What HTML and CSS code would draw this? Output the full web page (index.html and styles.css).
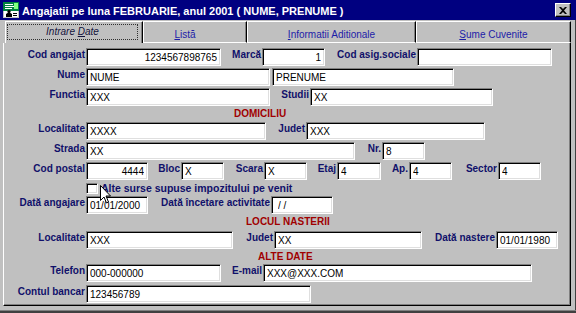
FILE: index.html
```html
<!DOCTYPE html>
<html lang="ro">
<head>
  <meta charset="UTF-8">
  <title>Angajatii pe luna FEBRUARIE</title>
  <link rel="stylesheet" href="styles.css">
</head>
<body>

<div class="fereastra">

  <div class="titlu">
    <svg class="icon" width="16" height="16" viewBox="0 0 16 16">
      <rect x="0" y="0" width="16" height="16" fill="#c0c0c0"/>
      <rect x="0" y="0" width="16" height="9" fill="#008040"/>
      <rect x="2" y="2" width="8" height="1" fill="#fff"/>
      <rect x="2" y="4" width="10" height="1" fill="#fff"/>
      <rect x="2" y="6" width="7" height="1" fill="#fff"/>
      <rect x="11" y="1" width="4" height="6" fill="#80ff80"/>
      <rect x="1" y="9" width="14" height="6" fill="#fff"/>
      <path d="M3 15 L3 12 L6 10 L9 12 L9 15 Z" fill="#000"/>
      <circle cx="6" cy="9.5" r="1.6" fill="#000"/>
      <rect x="10" y="11" width="4" height="1" fill="#000"/>
      <rect x="10" y="13" width="4" height="1" fill="#000"/>
    </svg>
    <span class="titlu-text">Angajatii pe luna FEBRUARIE, anul 2001 ( NUME, PRENUME )</span>
    <span class="inchide">
      <svg width="8" height="7" viewBox="0 0 8 7">
        <path d="M0 0 L2 0 L4 2 L6 0 L8 0 L5 3.5 L8 7 L6 7 L4 5 L2 7 L0 7 L3 3.5 Z" fill="#000"/>
      </svg>
    </span>
  </div>

  <div class="taburi">
    <div class="tab activ t1"><span class="focus"><i>Intrare <u>D</u>ate</i></span></div>
    <div class="tab t2"><u>L</u>istă</div>
    <div class="tab t3"><u>I</u>nformatii Aditionale</div>
    <div class="tab t4"><u>S</u>ume Cuvenite</div>
  </div>

  <div class="pagina">

    <div class="rand primul">
      <label class="lbl l-prim">Cod angajat</label>
      <input class="fld f-cod dr" value="1234567898765">
      <label class="lbl l-marca">Marcă</label>
      <input class="fld f-marca dr" value="1">
      <label class="lbl l-asig">Cod asig.sociale</label>
      <input class="fld f-asig" value="">
    </div>

    <div class="rand">
      <label class="lbl l-prim">Nume</label>
      <input class="fld f-nume" value="NUME">
      <input class="fld f-prenume" value="PRENUME">
    </div>

    <div class="rand">
      <label class="lbl l-prim">Functia</label>
      <input class="fld f-nume" value="XXX">
      <label class="lbl l-studii">Studii</label>
      <input class="fld f-studii" value="XX">
    </div>

    <div class="sectiune s-domiciliu">DOMICILIU</div>

    <div class="rand">
      <label class="lbl l-prim">Localitate</label>
      <input class="fld f-loc" value="XXXX">
      <label class="lbl l-judet">Judet</label>
      <input class="fld f-judet" value="XXX">
    </div>

    <div class="rand">
      <label class="lbl l-prim">Strada</label>
      <input class="fld f-strada" value="XX">
      <label class="lbl l-nr">Nr.</label>
      <input class="fld f-mic" value="8">
    </div>

    <div class="rand">
      <label class="lbl l-prim">Cod postal</label>
      <input class="fld f-data dr" value="4444">
      <label class="lbl l-bloc">Bloc</label>
      <input class="fld f-mic" value="X">
      <label class="lbl l-scara">Scara</label>
      <input class="fld f-mic" value="X">
      <label class="lbl l-etaj">Etaj</label>
      <input class="fld f-etaj" value="4">
      <label class="lbl l-ap">Ap.</label>
      <input class="fld f-mic" value="4">
      <label class="lbl l-sector">Sector</label>
      <input class="fld f-mic" value="4">
    </div>

    <div class="rand-bifa">
      <span class="bifa"></span>
      <span class="bifa-text">Alte surse supuse impozitului pe venit</span>
    </div>

    <div class="rand">
      <label class="lbl l-prim">Dată angajare</label>
      <input class="fld f-data" value="01/01/2000">
      <label class="lbl l-incetare">Dată încetare activitate</label>
      <input class="fld f-data f-gol" value="/ /">
    </div>

    <div class="sectiune s-nastere">LOCUL NASTERII</div>

    <div class="rand sus3">
      <label class="lbl l-prim">Localitate</label>
      <input class="fld f-locn" value="XXX">
      <label class="lbl l-judetn">Judet</label>
      <input class="fld f-judetn" value="XX">
      <label class="lbl l-nastere">Dată nastere</label>
      <input class="fld f-data" value="01/01/1980">
    </div>

    <div class="sectiune s-alte">ALTE DATE</div>

    <div class="rand sus1">
      <label class="lbl l-prim">Telefon</label>
      <input class="fld f-cod" value="000-000000">
      <label class="lbl l-email">E-mail</label>
      <input class="fld f-email" value="XXX@XXX.COM">
    </div>

    <div class="rand sus3">
      <label class="lbl l-prim">Contul bancar</label>
      <input class="fld f-cont" value="123456789">
    </div>

  </div>

  <svg class="cursor" width="12" height="19" viewBox="0 0 12 19">
    <path d="M0.5 0.5 L0.5 15.5 L4 12 L6.5 18 L8.5 17 L6 11 L10.5 11 Z" fill="#fff" stroke="#000" stroke-width="1"/>
  </svg>

</div>

</body>
</html>
```

FILE: styles.css
```css
body {
  margin: 0;
  font-family: "Liberation Sans", Arial, sans-serif;
  background-color: #c0c0c0;
}

.fereastra {
  position: relative;
  width: 576px;
  height: 313px;
  background-color: #c0c0c0;
  overflow: hidden;
  box-shadow: inset 0 -2px #404040, inset 0 -3px #808080, inset -1px 0 #404040;
}

/* bara de titlu */
.titlu {
  display: flex;
  align-items: center;
  height: 20px;
  background-color: #000080;
  color: white;
  padding-left: 3px;
}

.icon {
  display: block;
}

.titlu-text {
  flex: 1;
  margin-left: 3px;
  padding-top: 1px;
  font-size: 11px;
  font-weight: bold;
  white-space: nowrap;
}

.inchide {
  box-sizing: border-box;
  width: 16px;
  height: 14px;
  margin-right: 5px;
  display: flex;
  align-items: center;
  justify-content: center;
  background-color: #c0c0c0;
  border: 1px solid;
  border-color: #fff #000 #000 #fff;
  box-shadow: inset -1px -1px #808080;
}

/* taburi */
.taburi {
  display: flex;
  height: 22px;
  margin: 1px 0 0 5px;
}

.tab {
  box-sizing: border-box;
  height: 22px;
  padding-top: 7px;
  border-top: 1px solid #fff;
  border-left: 1px solid #fff;
  border-right: 1px solid #000;
  border-bottom: 1px solid #fff;
  box-shadow: inset -1px 0 #808080;
  font-size: 10px;
  line-height: 12px;
  color: #1c1ca8;
  text-align: center;
  white-space: nowrap;
}

.tab.activ {
  border-bottom: none;
  padding-top: 2px;
  color: #14143c;
}

.t1 { width: 138px; }
.t2 { width: 104px; padding-right: 20px; }
.t3 { width: 169px; }
.t4 { width: 155px; }

.focus {
  display: block;
  box-sizing: border-box;
  height: 16px;
  margin: 0 4px 0 1px;
  padding-top: 1px;
  border: 1px dotted #303030;
}

/* pagina cu campuri */
.pagina {
  box-sizing: border-box;
  width: 568px;
  margin-left: 3px;
  padding: 5px 0 2px 0;
  border-left: 1px solid #fff;
  border-right: 1px solid #000;
  border-bottom: 1px solid #000;
  box-shadow: inset -1px -1px #808080;
}

.rand {
  display: flex;
  align-items: flex-start;
  height: 18px;
  margin-top: 2px;
}

.rand.primul { margin-top: 0; }
.rand.sus3 { margin-top: 3px; }
.rand.sus1 { margin-top: 1px; }

.lbl {
  box-sizing: border-box;
  padding-right: 1px;
  padding-top: 1px;
  font-size: 10px;
  line-height: 12px;
  font-weight: bold;
  color: #10106a;
  text-align: right;
  white-space: nowrap;
}

.fld {
  box-sizing: border-box;
  height: 18px;
  margin: 0;
  padding: 0 3px;
  border: 1px solid;
  border-color: #808080 #fff #fff #808080;
  box-shadow: inset 1px 1px #000, inset -1px -1px #dfdfdf;
  background-color: white;
  font-family: "Liberation Sans", Arial, sans-serif;
  font-size: 10px;
  color: #000;
  outline: none;
}

.fld.dr { text-align: right; }
.fld.f-gol { padding-left: 6px; }

.sectiune {
  height: 12px;
  margin-top: 2px;
  font-size: 10px;
  line-height: 12px;
  font-weight: bold;
  color: #a00000;
  white-space: nowrap;
}

.s-domiciliu { padding-left: 230px; }
.s-nastere { padding-left: 242px; }
.s-alte { padding-left: 254px; }

.rand-bifa {
  display: flex;
  align-items: flex-start;
  height: 12px;
  margin-top: 2px;
  padding-left: 82px;
}

.bifa {
  box-sizing: border-box;
  width: 12px;
  height: 11px;
  margin-top: 1px;
  background-color: white;
  border: 1px solid;
  border-color: #808080 #fff #fff #808080;
  box-shadow: inset 1px 1px #000, inset -1px -1px #dfdfdf;
}

.bifa-text {
  margin-left: 3px;
  font-size: 10.5px;
  line-height: 12px;
  font-weight: bold;
  color: #10106a;
  white-space: nowrap;
}

/* latimi etichete */
.l-prim { width: 82px; }
.l-marca { width: 41px; }
.l-asig { width: 92px; }
.l-studii { width: 40px; }
.l-judet { width: 40px; }
.l-nr { width: 27px; }
.l-bloc { width: 33px; }
.l-scara { width: 40px; }
.l-etaj { width: 30px; }
.l-ap { width: 28px; }
.l-sector { width: 46px; }
.l-incetare { width: 123px; }
.l-judetn { width: 41px; }
.l-nastere { width: 74px; }
.l-email { width: 42px; }

/* latimi campuri */
.f-cod { width: 135px; }
.f-marca { width: 63px; }
.f-asig { width: 135px; }
.f-nume { width: 184px; }
.f-prenume { width: 182px; margin-left: 2px; }
.f-studii { width: 183px; }
.f-loc { width: 180px; }
.f-judet { width: 179px; }
.f-strada { width: 269px; }
.f-mic { width: 43px; }
.f-etaj { width: 44px; }
.f-data { width: 62px; }
.f-locn { width: 147px; }
.f-judetn { width: 148px; }
.f-email { width: 269px; }
.f-cont { width: 225px; }

.cursor {
  position: absolute;
  left: 100px;
  top: 185px;
}
```
